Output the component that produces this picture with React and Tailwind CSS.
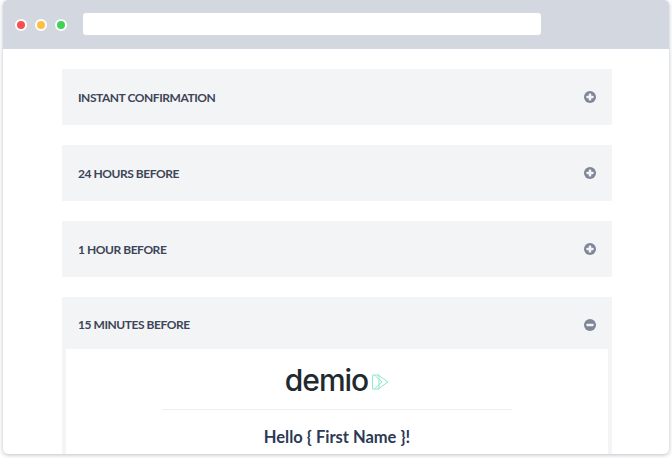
const font = { fontFamily: 'Lato, "Noto Sans", sans-serif' };

function PlusIcon({ minus }) {
  return (
    <svg width="12" height="12" viewBox="0 0 12 12" className="block">
      <circle cx="6" cy="6" r="6" fill="#7e8698" />
      <rect x="2.5" y="4.75" width="7" height="2.5" rx="0.4" fill="#f3f4f6" />
      {!minus && <rect x="4.75" y="2.5" width="2.5" height="7" rx="0.4" fill="#f3f4f6" />}
    </svg>
  );
}

function Row({ title }) {
  return (
    <div className="flex h-[56px] items-center justify-between bg-[#f3f4f6] pl-4 pr-4">
      <span className="pt-[1px] text-[12px] leading-[16px] font-bold tracking-[-0.45px] text-[#3d4557]">{title}</span>
      <PlusIcon />
    </div>
  );
}

function Dot({ color }) {
  return <span className={`h-[12px] w-[12px] rounded-full border-[2.5px] border-white ${color}`} />;
}

export default function App() {
  return (
    <div className="h-[458px] w-[672px] overflow-hidden bg-white px-[3px] pb-[4px]" style={font}>
      <div className="flex h-[454px] flex-col overflow-hidden rounded-[5px] bg-white shadow-[0_1px_4px_rgba(60,70,90,0.35)]">
        <div className="flex h-[49px] shrink-0 items-center bg-[#d3d7e0] pl-[12px]">
          <div className="flex items-center gap-[8px]">
            <Dot color="bg-[#fc4d51]" />
            <Dot color="bg-[#fdbf3f]" />
            <Dot color="bg-[#3ed354]" />
          </div>
          <div className="ml-[16px] mb-[2px] h-[22px] w-[458px] rounded-[3px] bg-white" />
        </div>
        <div className="flex flex-1 flex-col gap-[20px] pt-[20px] pl-[59px] pr-[57px]">
          <Row title="INSTANT CONFIRMATION" />
          <Row title="24 HOURS BEFORE" />
          <Row title="1 HOUR BEFORE" />
          <div className="flex-1 bg-[#f3f4f6] px-[4px]">
            <div className="flex h-[52px] items-start justify-between pl-3 pr-3 pt-[20px]">
              <span className="text-[12px] leading-[16px] font-bold tracking-[-0.45px] text-[#3d4557]">15 MINUTES BEFORE</span>
              <span className="pt-[2px]"><PlusIcon minus /></span>
            </div>
            <div className="flex h-[105px] flex-col items-center bg-white">
              <div className="mt-[15px] flex h-[32px] items-center">
                <span className="text-[30px] leading-none font-medium tracking-[-1px] text-[#1f2a30]" style={{ fontFamily: 'Inter, sans-serif' }}>demio</span>
                <svg width="17" height="16" viewBox="0 0 17 16" fill="none" stroke="#8fe8cf" strokeWidth="1" className="ml-[4px] mt-[3px]">
                  <path d="M0.5 1 L7 1 L7 15 L0.5 15 Z" />
                  <path d="M2.5 1 L10 8 L2.5 15" />
                  <path d="M6 1 L16 8 L6 15" />
                </svg>
              </div>
              <div className="mt-[13px] h-px w-[350px] bg-[#eceef1]" />
              <div className="mt-[19px] text-[16.5px] leading-none font-bold text-[#2c3a55]">Hello {'{'} First Name {'}'}!</div>
            </div>
          </div>
        </div>
      </div>
    </div>
  );
}
